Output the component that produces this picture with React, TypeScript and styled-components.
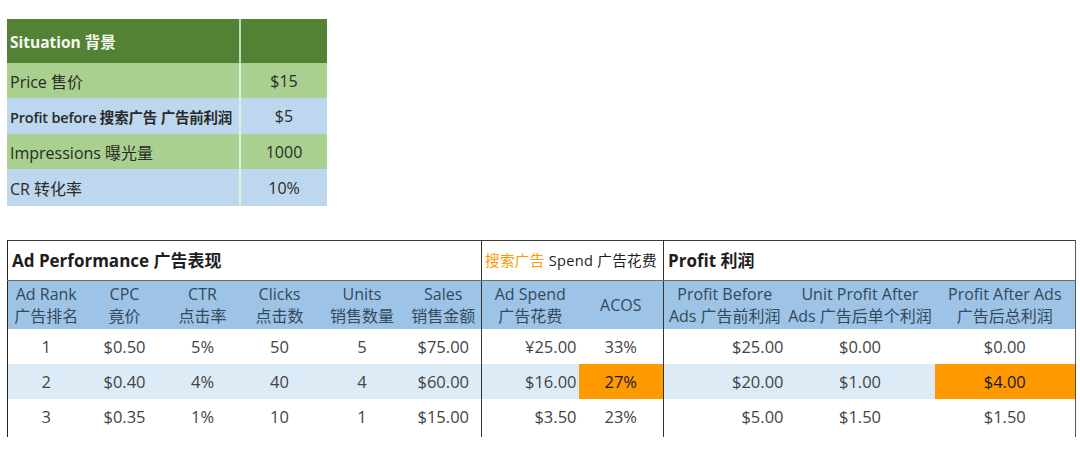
import React from "react";
import styled, { createGlobalStyle } from "styled-components";

const Global = createGlobalStyle`
  html, body { margin: 0; padding: 0; background: #ffffff; }
  body { font-family: "Open Sans", "Noto Sans CJK SC", sans-serif; }
`;

const Page = styled.div`
  width: 1080px;
  height: 461px;
  padding: 19px 0 0 7px;
  box-sizing: border-box;
  display: flex;
  flex-direction: column;
  gap: 34px;
`;

const SituationTable = styled.table`
  border-collapse: collapse;
  width: 320px;
  table-layout: fixed;
  font-family: "Open Sans", "Noto Sans CJK SC", sans-serif;
  color: #2a2a2a;
`;

const SitHead = styled.th`
  background: #548235;
  color: #f4f8ef;
  font-size: 15.5px;
  font-weight: 700;
  height: 44px;
  padding: 0 0 0 3px;
  text-align: left;
  border-right: 2px solid #c9d8bd;
  &:last-child { border-right: none; }
`;

const SitRow = styled.tr<{ $h: number }>`
  height: ${(p) => p.$h}px;
`;

const SitCell = styled.td<{ $tone: "green" | "blue"; $small?: boolean; $value?: boolean }>`
  background: ${(p) => (p.$tone === "green" ? "#a9d08e" : "#bdd7ee")};
  padding: 0 0 0 3px;
  font-size: ${(p) => (p.$small ? "14.5px" : "16px")};
  font-weight: ${(p) => (p.$small ? 600 : 400)};
  text-align: ${(p) => (p.$value ? "center" : "left")};
  white-space: nowrap;
  letter-spacing: ${(p) => (p.$small ? "-0.2px" : "0")};
  border-right: 2px solid #e4eddc;
  &:last-child { border-right: none; padding: 0; }
`;

const PerfTable = styled.table`
  border-collapse: collapse;
  table-layout: fixed;
  width: 1068px;
  font-family: "Open Sans", "Noto Sans CJK SC", sans-serif;
  border-top: 1px solid #3a3a3a;
  border-left: 1px solid #222;
  border-right: 1px solid #555;
`;

const TitleRow = styled.tr`
  height: 40px;
`;

const TitleCell = styled.td<{ $divider?: boolean }>`
  padding: 0 0 3px 4px;
  font-size: 17px;
  font-weight: 700;
  color: #1e1e1e;
  border-bottom: 1px solid #6b6b6b;
  border-left: ${(p) => (p.$divider ? "1px solid #333" : "none")};
  white-space: nowrap;
`;

const SpendTitle = styled(TitleCell)`
  font-size: 14.6px;
  font-weight: 400;
  padding: 0 0 3px 3px;
  letter-spacing: 0.3px;
`;

const Orange = styled.span`
  color: #ff9900;
`;

const HeadRow = styled.tr`
  height: 48px;
`;

const HeadCell = styled.th<{ $divider?: boolean }>`
  background: #9dc3e6;
  padding: 1px 0 0;
  font-size: 16px;
  font-weight: 400;
  line-height: 22px;
  color: #34495c;
  text-align: center;
  white-space: nowrap;
  border-left: ${(p) => (p.$divider ? "1px solid #333" : "none")};
`;

const BodyRow = styled.tr<{ $last?: boolean }>`
  height: ${(p) => (p.$last ? 38 : 35)}px;
`;

const Cell = styled.td<{
  $align?: "center" | "right";
  $divider?: boolean;
  $alt?: boolean;
  $hi?: boolean;
  $last?: boolean;
}>`
  padding: 0 ${(p) => (p.$align === "right" ? "2px" : "0")} ${(p) => (p.$last ? "3px" : "0")} 0;
  font-size: 16.5px;
  color: ${(p) => (p.$hi ? "#1a1a1a" : "#444")};
  text-align: ${(p) => p.$align ?? "center"};
  background: ${(p) => (p.$hi ? "#ff9900" : p.$alt ? "#ddebf7" : "#ffffff")};
  border-left: ${(p) => (p.$divider ? "1px solid #333" : "none")};
  white-space: nowrap;
`;

const cols = [77, 80, 76, 78, 87, 76, 97, 85, 122, 149, 141];

type Row = {
  rank: string; cpc: string; ctr: string; clicks: string; units: string; sales: string;
  spend: string; acos: string; before: string; unit: string; after: string;
  alt?: boolean; hiAcos?: boolean; hiAfter?: boolean;
};

const rows: Row[] = [
  { rank: "1", cpc: "$0.50", ctr: "5%", clicks: "50", units: "5", sales: "$75.00", spend: "¥25.00", acos: "33%", before: "$25.00", unit: "$0.00", after: "$0.00" },
  { rank: "2", cpc: "$0.40", ctr: "4%", clicks: "40", units: "4", sales: "$60.00", spend: "$16.00", acos: "27%", before: "$20.00", unit: "$1.00", after: "$4.00", alt: true, hiAcos: true, hiAfter: true },
  { rank: "3", cpc: "$0.35", ctr: "1%", clicks: "10", units: "1", sales: "$15.00", spend: "$3.50", acos: "23%", before: "$5.00", unit: "$1.50", after: "$1.50" },
];

export default function App() {
  return (
    <>
      <Global />
      <Page>
        <SituationTable>
          <colgroup>
            <col style={{ width: 233 }} />
            <col style={{ width: 87 }} />
          </colgroup>
          <thead>
            <tr>
              <SitHead>Situation 背景</SitHead>
              <SitHead></SitHead>
            </tr>
          </thead>
          <tbody>
            <SitRow $h={35}>
              <SitCell $tone="green">Price 售价</SitCell>
              <SitCell $tone="green" $value>$15</SitCell>
            </SitRow>
            <SitRow $h={36}>
              <SitCell $tone="blue" $small>Profit before 搜索广告 广告前利润</SitCell>
              <SitCell $tone="blue" $value>$5</SitCell>
            </SitRow>
            <SitRow $h={35}>
              <SitCell $tone="green">Impressions 曝光量</SitCell>
              <SitCell $tone="green" $value>1000</SitCell>
            </SitRow>
            <SitRow $h={37}>
              <SitCell $tone="blue">CR 转化率</SitCell>
              <SitCell $tone="blue" $value>10%</SitCell>
            </SitRow>
          </tbody>
        </SituationTable>

        <PerfTable>
          <colgroup>
            {cols.map((w, i) => (
              <col key={i} style={{ width: w }} />
            ))}
          </colgroup>
          <tbody>
            <TitleRow>
              <TitleCell colSpan={6}>Ad Performance 广告表现</TitleCell>
              <SpendTitle colSpan={2} $divider>
                <Orange>搜索广告</Orange> Spend 广告花费
              </SpendTitle>
              <TitleCell colSpan={3} $divider>Profit 利润</TitleCell>
            </TitleRow>
            <HeadRow>
              <HeadCell>Ad Rank<br />广告排名</HeadCell>
              <HeadCell>CPC<br />竟价</HeadCell>
              <HeadCell>CTR<br />点击率</HeadCell>
              <HeadCell>Clicks<br />点击数</HeadCell>
              <HeadCell>Units<br />销售数量</HeadCell>
              <HeadCell>Sales<br />销售金额</HeadCell>
              <HeadCell $divider>Ad Spend<br />广告花费</HeadCell>
              <HeadCell>ACOS</HeadCell>
              <HeadCell $divider>Profit Before<br />Ads 广告前利润</HeadCell>
              <HeadCell>Unit Profit After<br />Ads 广告后单个利润</HeadCell>
              <HeadCell>Profit After Ads<br />广告后总利润</HeadCell>
            </HeadRow>
            {rows.map((r, i) => {
              const last = i === rows.length - 1;
              return (
                <BodyRow key={r.rank} $last={last}>
                  <Cell $alt={r.alt} $last={last}>{r.rank}</Cell>
                  <Cell $alt={r.alt} $last={last}>{r.cpc}</Cell>
                  <Cell $alt={r.alt} $last={last}>{r.ctr}</Cell>
                  <Cell $alt={r.alt} $last={last}>{r.clicks}</Cell>
                  <Cell $alt={r.alt} $last={last}>{r.units}</Cell>
                  <Cell $alt={r.alt} $last={last}>{r.sales}</Cell>
                  <Cell $alt={r.alt} $last={last} $divider $align="right">{r.spend}</Cell>
                  <Cell $alt={r.alt} $last={last} $hi={r.hiAcos}>{r.acos}</Cell>
                  <Cell $alt={r.alt} $last={last} $divider $align="right">{r.before}</Cell>
                  <Cell $alt={r.alt} $last={last}>{r.unit}</Cell>
                  <Cell $alt={r.alt} $last={last} $hi={r.hiAfter}>{r.after}</Cell>
                </BodyRow>
              );
            })}
          </tbody>
        </PerfTable>
      </Page>
    </>
  );
}
